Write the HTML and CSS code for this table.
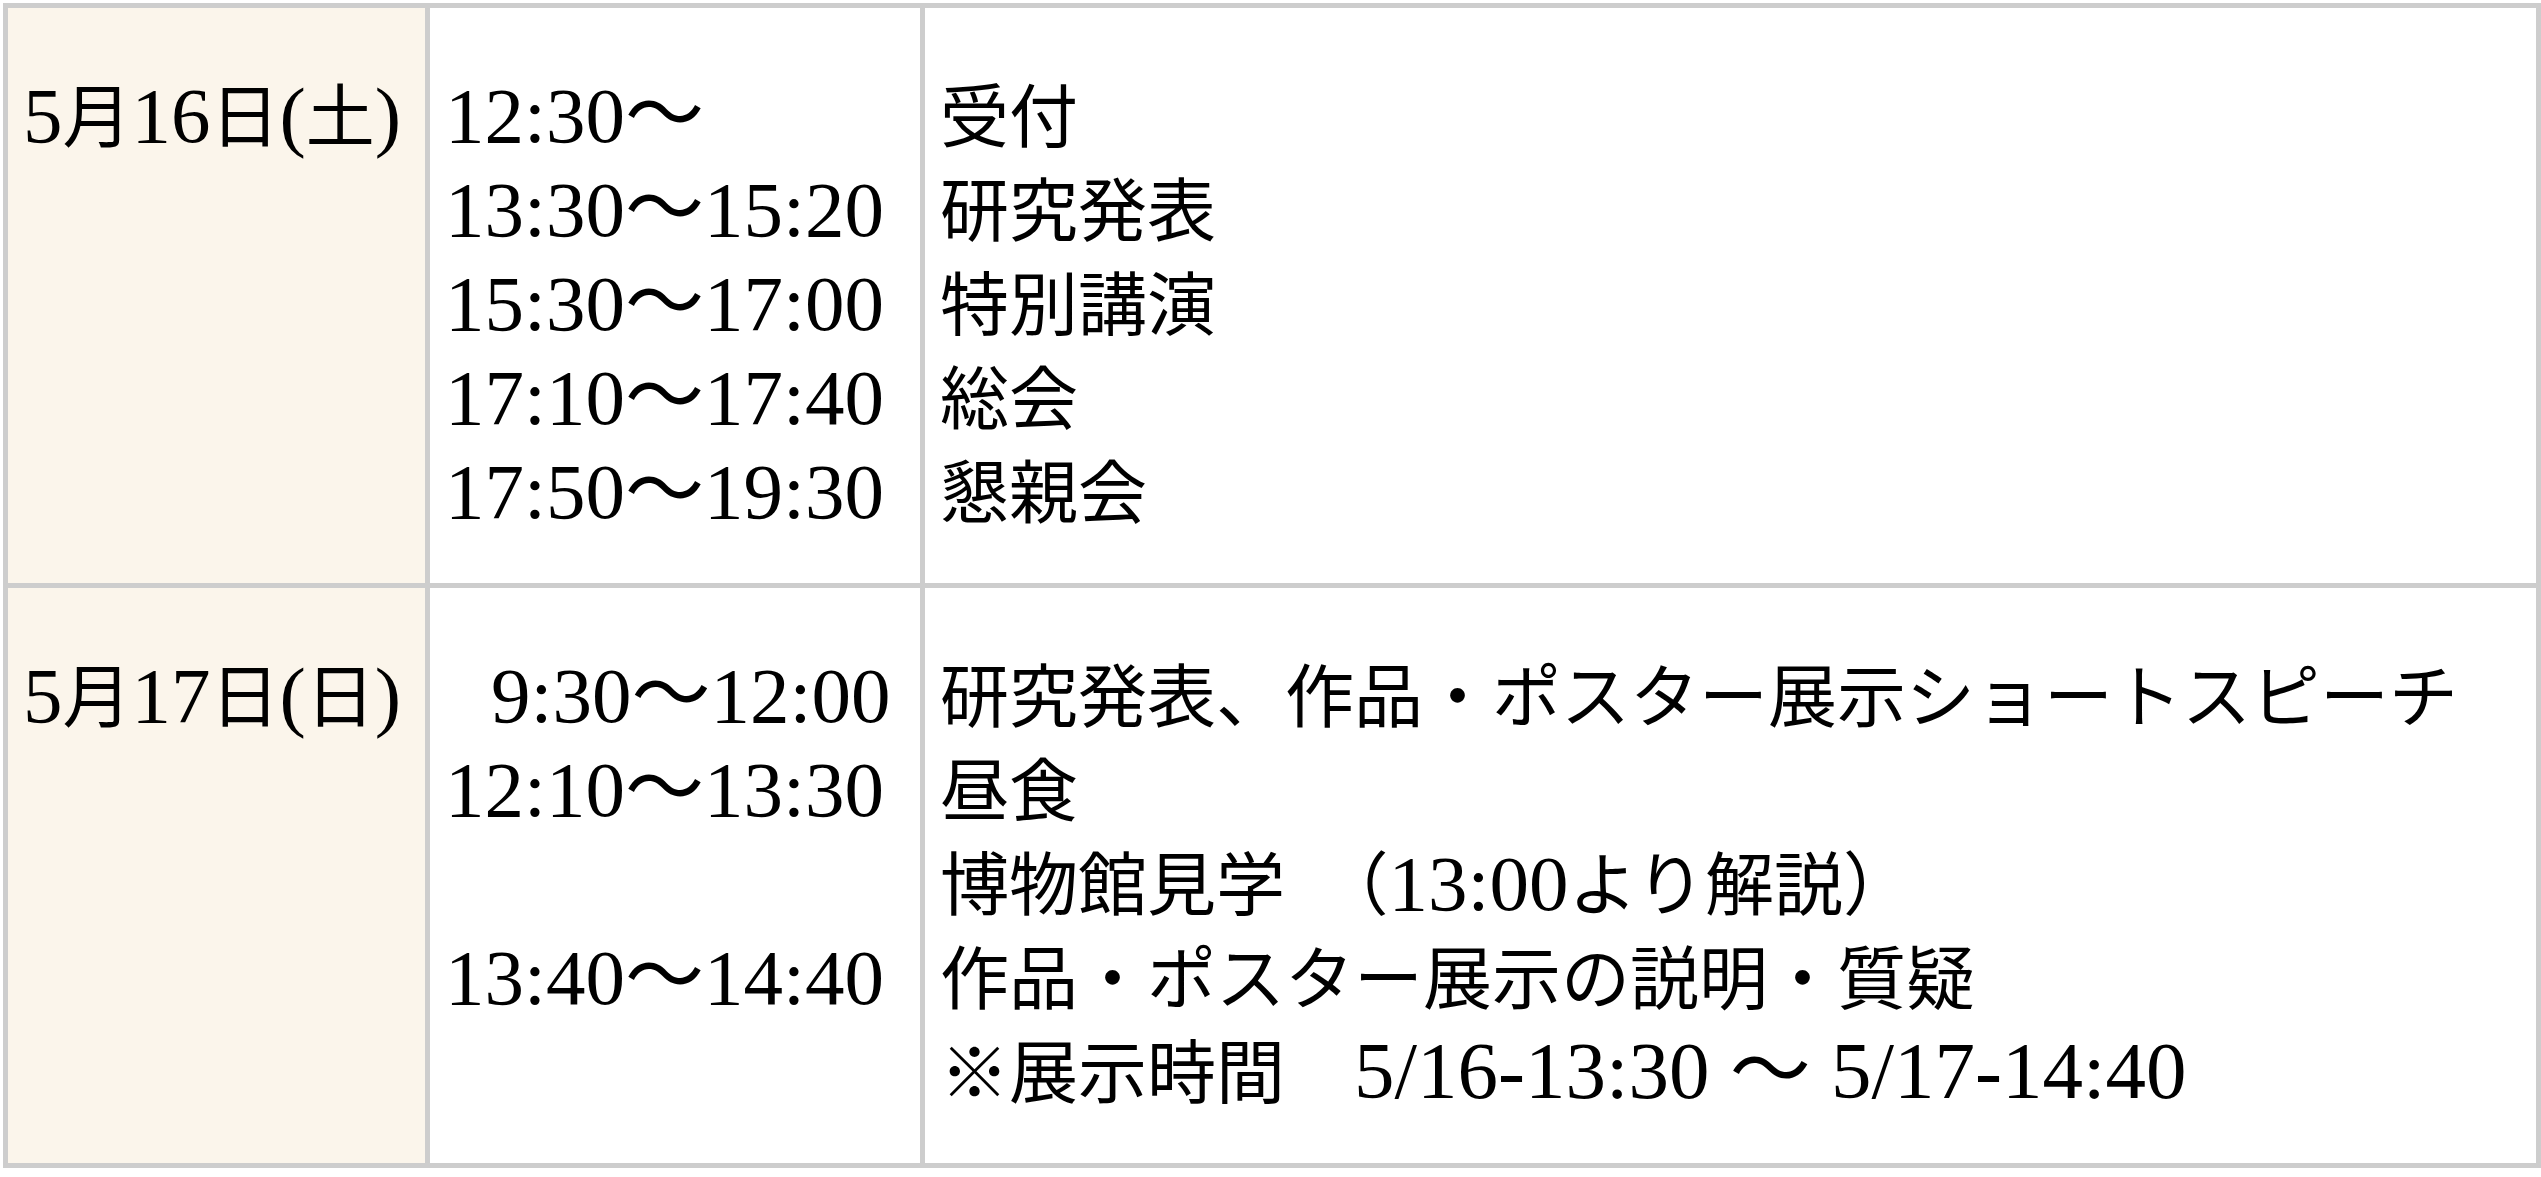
FILE: index.html
```html
<!DOCTYPE html>
<html lang="ja">
<head>
<meta charset="utf-8">
<title>日程</title>
<link rel="stylesheet" href="styles.css">
</head>
<body>
<table class="schedule">
  <tbody>
    <tr>
      <td class="date"><div class="ln"><span class="n">5</span>月<span class="n">16</span>日<span class="n">(</span>土<span class="n">)</span></div></td>
      <td class="time">
        <div class="ln"><span class="n">12:30〜</span></div>
        <div class="ln"><span class="n">13:30〜15:20</span></div>
        <div class="ln"><span class="n">15:30〜17:00</span></div>
        <div class="ln"><span class="n">17:10〜17:40</span></div>
        <div class="ln"><span class="n">17:50〜19:30</span></div>
      </td>
      <td class="event">
        <div class="ln">受付</div>
        <div class="ln">研究発表</div>
        <div class="ln">特別講演</div>
        <div class="ln">総会</div>
        <div class="ln">懇親会</div>
      </td>
    </tr>
    <tr>
      <td class="date"><div class="ln"><span class="n">5</span>月<span class="n">17</span>日<span class="n">(</span>日<span class="n">)</span></div></td>
      <td class="time">
        <div class="ln ind"><span class="n">9:30〜12:00</span></div>
        <div class="ln"><span class="n">12:10〜13:30</span></div>
        <div class="ln">&nbsp;</div>
        <div class="ln"><span class="n">13:40〜14:40</span></div>
        <div class="ln">&nbsp;</div>
      </td>
      <td class="event">
        <div class="ln">研究発表、作品・ポスター展示ショートスピーチ</div>
        <div class="ln">昼食</div>
        <div class="ln">博物館見学　（<span class="n">13:00</span>より解説）</div>
        <div class="ln">作品・ポスター展示の説明・質疑</div>
        <div class="ln">※展示時間　<span class="n wide">5/16-13:30 〜 5/17-14:40</span></div>
      </td>
    </tr>
  </tbody>
</table>
</body>
</html>
```

FILE: styles.css
```css
html, body {
  background: #ffffff;
}

body {
  margin: 3px 0 0 3px;
  color: #000000;
  font-family: "Liberation Serif", "Noto Sans CJK JP", serif;
}

.schedule {
  width: 2538px;
  table-layout: fixed;
  border-collapse: separate;
  border-spacing: 0;
  border-top: 5px solid #cdcdcd;
  border-left: 5px solid #cdcdcd;
}

.schedule td {
  box-sizing: border-box;
  vertical-align: top;
  padding: 64px 15px 41px 15px;
  border-right: 5px solid #cdcdcd;
  border-bottom: 5px solid #cdcdcd;
  font-size: 69px;
  line-height: 94px;
  white-space: nowrap;
}

.schedule td.date {
  width: 422px;
  background: #fbf5eb;
}

.schedule td.time {
  width: 495px;
}

.schedule td.event {
  width: 1616px;
}

.ln {
  height: 94px;
}

.ind {
  padding-left: 46px;
}

.n {
  font-family: "Liberation Serif", "Noto Sans CJK JP", serif;
  font-size: 79px;
  line-height: 1;
}

.wide {
  font-size: 81px;
}
```
